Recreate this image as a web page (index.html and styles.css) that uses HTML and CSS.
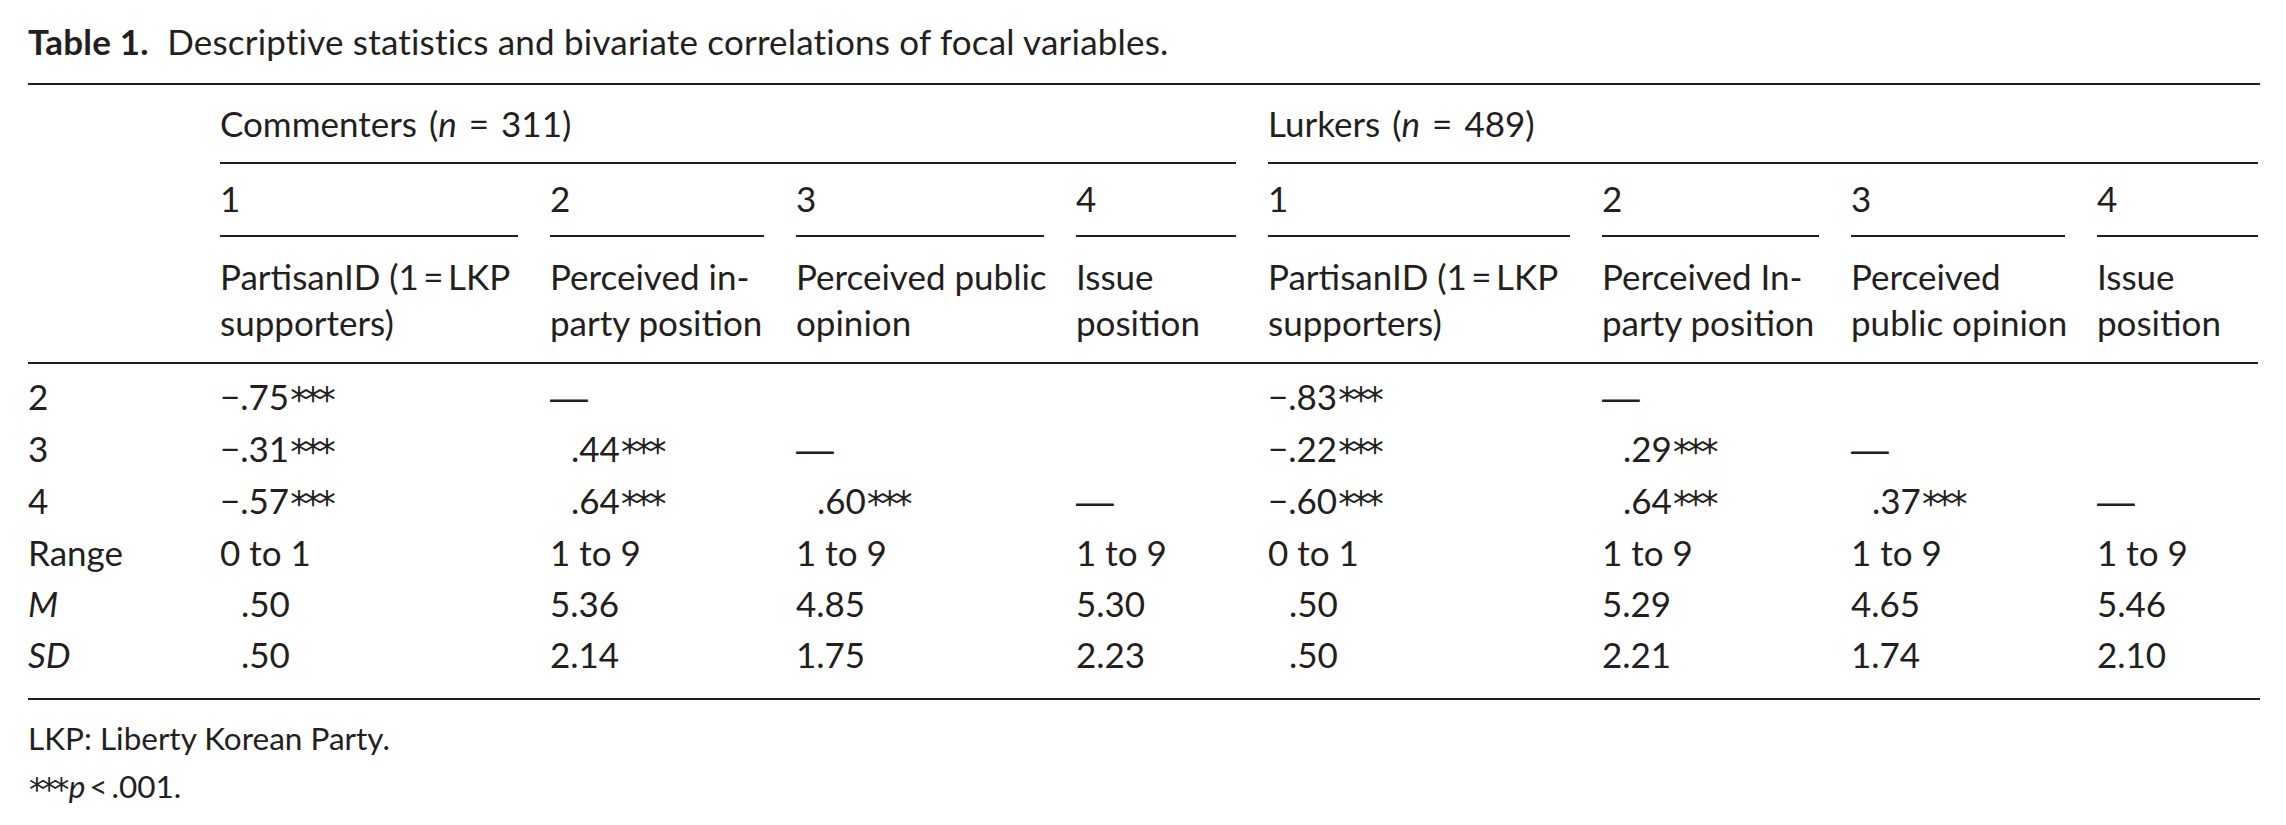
FILE: index.html
```html
<!DOCTYPE html>
<html lang="en">
<head>
<meta charset="utf-8">
<title>Table 1</title>
<link rel="stylesheet" href="styles.css">
</head>
<body>
<div class="page">
  <p class="caption"><b>Table 1.</b>&nbsp; Descriptive statistics and bivariate correlations of focal variables.</p>
  <div class="tbl">
    <div class="c grp-lbl"></div>
    <div class="c grp">Commenters (<i>n</i> = 311)</div>
    <div class="c grp">Lurkers (<i>n</i> = 489)</div>

    <div class="c num-lbl"></div>
    <div class="c num">1</div>
    <div class="c num">2</div>
    <div class="c num">3</div>
    <div class="c num">4</div>
    <div class="c num">1</div>
    <div class="c num">2</div>
    <div class="c num">3</div>
    <div class="c num">4</div>

    <div class="c head"></div>
    <div class="c head">PartisanID (1&#8201;=&#8201;LKP<br>supporters)</div>
    <div class="c head">Perceived in-<br>party position</div>
    <div class="c head">Perceived public<br>opinion</div>
    <div class="c head">Issue<br>position</div>
    <div class="c head">PartisanID (1&#8201;=&#8201;LKP<br>supporters)</div>
    <div class="c head">Perceived In-<br>party position</div>
    <div class="c head">Perceived<br>public opinion</div>
    <div class="c head">Issue<br>position</div>

    <div class="hr"></div>

    <div class="c d first">2</div>
    <div class="c d first">&minus;.75<sup class="ast">***</sup></div>
    <div class="c d first"><span class="dash">&mdash;</span></div>
    <div class="c d first"></div>
    <div class="c d first"></div>
    <div class="c d first">&minus;.83<sup class="ast">***</sup></div>
    <div class="c d first"><span class="dash">&mdash;</span></div>
    <div class="c d first"></div>
    <div class="c d first"></div>

    <div class="c d">3</div>
    <div class="c d">&minus;.31<sup class="ast">***</sup></div>
    <div class="c d ind">.44<sup class="ast">***</sup></div>
    <div class="c d"><span class="dash">&mdash;</span></div>
    <div class="c d"></div>
    <div class="c d">&minus;.22<sup class="ast">***</sup></div>
    <div class="c d ind">.29<sup class="ast">***</sup></div>
    <div class="c d"><span class="dash">&mdash;</span></div>
    <div class="c d"></div>

    <div class="c d">4</div>
    <div class="c d">&minus;.57<sup class="ast">***</sup></div>
    <div class="c d ind">.64<sup class="ast">***</sup></div>
    <div class="c d ind">.60<sup class="ast">***</sup></div>
    <div class="c d"><span class="dash">&mdash;</span></div>
    <div class="c d">&minus;.60<sup class="ast">***</sup></div>
    <div class="c d ind">.64<sup class="ast">***</sup></div>
    <div class="c d ind">.37<sup class="ast">***</sup></div>
    <div class="c d"><span class="dash">&mdash;</span></div>

    <div class="c d">Range</div>
    <div class="c d">0 to 1</div>
    <div class="c d">1 to 9</div>
    <div class="c d">1 to 9</div>
    <div class="c d">1 to 9</div>
    <div class="c d">0 to 1</div>
    <div class="c d">1 to 9</div>
    <div class="c d">1 to 9</div>
    <div class="c d">1 to 9</div>

    <div class="c d"><i>M</i></div>
    <div class="c d ind">.50</div>
    <div class="c d">5.36</div>
    <div class="c d">4.85</div>
    <div class="c d">5.30</div>
    <div class="c d ind">.50</div>
    <div class="c d">5.29</div>
    <div class="c d">4.65</div>
    <div class="c d">5.46</div>

    <div class="c d last"><i>SD</i></div>
    <div class="c d last ind">.50</div>
    <div class="c d last">2.14</div>
    <div class="c d last">1.75</div>
    <div class="c d last">2.23</div>
    <div class="c d last ind">.50</div>
    <div class="c d last">2.21</div>
    <div class="c d last">1.74</div>
    <div class="c d last">2.10</div>
  </div>
  <div class="notes">
    <p>LKP: Liberty Korean Party.</p>
    <p><sup class="ast">***</sup><i>p</i>&#8201;&lt;&#8201;.001.</p>
  </div>
</div>
</body>
</html>
```

FILE: styles.css
```css
html, body {
  margin: 0;
  padding: 0;
  background: #ffffff;
}

body {
  font-family: Lato, "Open Sans", "Liberation Sans", sans-serif;
  font-size: 35px;
  color: #231f20;
}

.page {
  padding: 0 26px 0 28px;
}

.caption {
  margin: 0;
  padding-top: 18px;
  line-height: 46px;
  margin-bottom: 19px;
  letter-spacing: 0.2px;
}

.caption b {
  font-weight: 700;
}

.tbl {
  display: grid;
  grid-template-columns: 160px 298px 214px 248px 160px 302px 217px 214px 161px;
  column-gap: 32px;
  border-top: 2px solid #231f20;
  border-bottom: 2px solid #231f20;
}

.c {
  white-space: nowrap;
}

.grp,
.grp-lbl {
  padding: 15px 0 16px;
  line-height: 46px;
  word-spacing: 3px;
}

.grp {
  grid-column: span 4;
  border-bottom: 2px solid #231f20;
}

.num,
.num-lbl {
  padding: 11px 0 14px;
  line-height: 46px;
}

.num {
  border-bottom: 2px solid #231f20;
}

.head {
  padding: 16px 0 17px;
  line-height: 46px;
}

.hr {
  grid-column: 1 / -1;
  height: 2px;
  background: #231f20;
}

.d {
  line-height: 51px;
}

.first {
  padding-top: 7px;
}

.last {
  padding-bottom: 18px;
}

.ind {
  padding-left: 0.6em;
}

.ast {
  font-family: "DejaVu Sans", sans-serif;
  font-size: 1em;
  font-weight: 400;
  line-height: 0;
  vertical-align: -2px;
  letter-spacing: -3.5px;
  margin-left: 1px;
  margin-right: 3px;
}

.dash {
  font-family: "Liberation Sans", Arial, sans-serif;
  font-size: 1.08em;
}

.notes {
  margin-top: 14px;
  font-size: 31.5px;
}

.notes p {
  margin: 0;
  line-height: 48px;
}
```
